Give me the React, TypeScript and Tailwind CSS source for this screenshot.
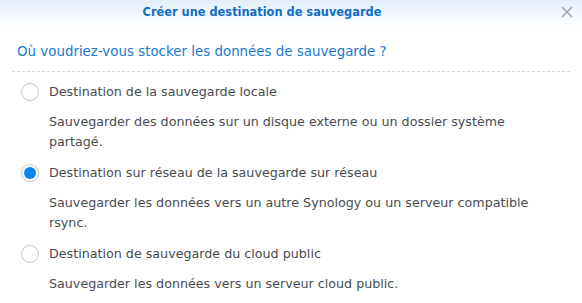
import { useState } from 'react';

const options = [
  {
    label: 'Destination de la sauvegarde locale',
    desc: 'Sauvegarder des données sur un disque externe ou un dossier système partagé.',
  },
  {
    label: 'Destination sur réseau de la sauvegarde sur réseau',
    desc: 'Sauvegarder les données vers un autre Synology ou un serveur compatible rsync.',
  },
  {
    label: 'Destination de sauvegarde du cloud public',
    desc: 'Sauvegarder les données vers un serveur cloud public.',
  },
];

function Radio({ checked }: { checked: boolean }) {
  return (
    <span className="w-[18px] h-[18px] shrink-0 rounded-full border border-[#c8c8c8] bg-white flex items-center justify-center">
      {checked && <span className="w-[12px] h-[12px] rounded-full bg-[#0a84f0]" />}
    </span>
  );
}

export default function App() {
  const [selected, setSelected] = useState(1);

  return (
    <div className="w-[582px] h-[303px] bg-white overflow-hidden font-['DejaVu_Sans',Verdana,sans-serif]">
      {/* title bar */}
      <div className="relative h-[26px] pr-[58px] bg-gradient-to-b from-[#e4eefa] to-white flex items-center justify-center">
        <span className="text-[11.4px] font-bold text-[#0f6ec6]">Créer une destination de sauvegarde</span>
        <button className="absolute right-[8px] top-[5px] text-[#a0a4a8]">
          <svg className="w-[14px] h-[14px]" viewBox="0 0 14 14" fill="none" stroke="currentColor" strokeWidth={1.6}>
            <path d="M2 2l10 10M12 2L2 12" />
          </svg>
        </button>
      </div>

      <div className="px-[12px]">
        <h2 className="pt-[16px] pl-[5px] text-[13.4px] leading-[20px] text-[#1a78cf]">
          Où voudriez-vous stocker les données de sauvegarde ?
        </h2>
        <div className="mt-[9px] border-t border-dashed border-[#d8d8d8]" />

        <div className="pt-[9px]">
          {options.map((o, i) => (
            <div key={i}>
              <label className="flex items-center gap-[10px] pl-[9px] h-[22px] cursor-pointer" onClick={() => setSelected(i)}>
                <Radio checked={selected === i} />
                <span className="text-[12.7px] text-[#484c50]">{o.label}</span>
              </label>
              <p className="pl-[37px] pr-[40px] pt-[9px] pb-[10px] text-[12.7px] leading-[20px] text-[#484c50]">{o.desc}</p>
            </div>
          ))}
        </div>
      </div>
    </div>
  );
}
